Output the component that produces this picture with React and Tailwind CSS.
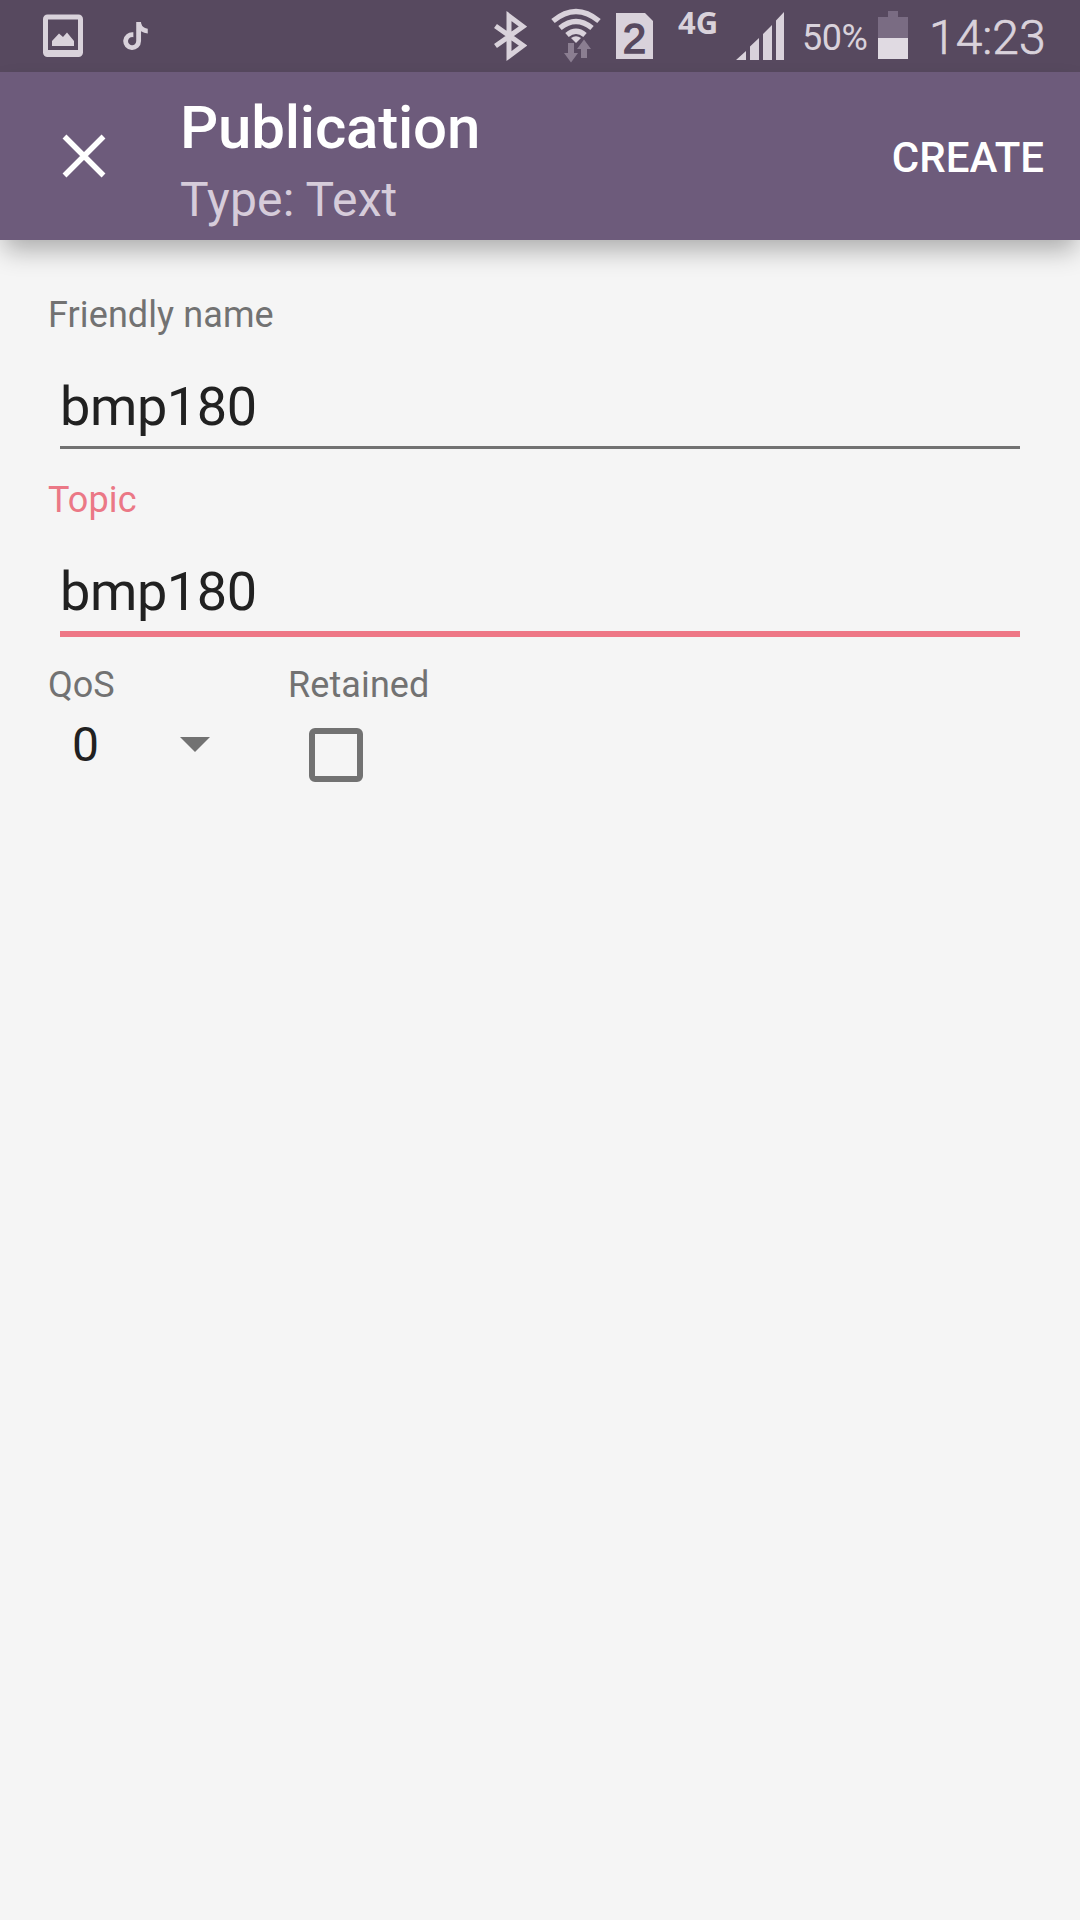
import { FaTiktok } from "react-icons/fa6";

function PictureIcon() {
  return (
    <svg className="w-10 h-[43px] mt-[14px] ml-[43px]" viewBox="0 0 40 43">
      <rect x="2.5" y="3" width="35" height="37.5" rx="2" fill="none" stroke="#d9d2db" strokeWidth="5" />
      <path d="M2 36H38V40.5H2Z M9 27L16 19.5L20 23L24 18.5L31 27V32H9Z" fill="#d9d2db" />
    </svg>
  );
}

function BluetoothIcon() {
  return (
    <svg className="w-[34px] h-[50px] mt-[11px] ml-[345px]" viewBox="0 0 34 50">
      <path
        d="M2.5 15L30 34.5L16 45V5L30 15.5L2.5 35"
        fill="none"
        stroke="#d9d2db"
        strokeWidth="5"
      />
    </svg>
  );
}

function WifiIcon() {
  return (
    <svg className="w-[50px] h-[56px] mt-2 ml-[24px]" viewBox="0 0 50 56">
      <g fill="none" stroke="#d9d2db" strokeWidth="5.4">
        <path d="M2 13Q25 -6 48 13" />
        <path d="M9 20Q25 7 41 20" />
        <path d="M16 27Q25 19.5 34 27" />
      </g>
      <path d="M20 30Q25 26.5 30 30L25 35Z" fill="#d9d2db" />
      <path d="M17 35H23V45H27L20 54.5L13 45H17Z" fill="#8b7e91" />
      <path d="M33 31.5L40 41H36V50H30V41H26Z" fill="#8b7e91" />
    </svg>
  );
}

function SimIcon() {
  return (
    <svg className="w-[37px] h-[46px] mt-[13px] ml-[15px] overflow-visible" viewBox="0 0 37 46">
      <path d="M0 0H29L37 8V46H0Z" fill="#d9d2db" />
      <text
        x="18.5"
        y="39.5"
        textAnchor="middle"
        fontSize="42"
        className="font-['Liberation_Sans',sans-serif]"
        fill="#57495f"
        stroke="#57495f"
        strokeWidth="1.5"
      >
        2
      </text>
    </svg>
  );
}

function SignalIcon() {
  return (
    <svg className="w-12 h-12 mt-3 ml-[18px]" viewBox="0 0 48 48">
      <path d="M0 48L10 39V48Z M14 34.5L23 26V48H14Z M27 22L36 13V48H27Z M40 8.5L48 0V48H40Z" fill="#d9d2db" />
    </svg>
  );
}

function BatteryIcon() {
  return (
    <svg className="w-[30px] h-12 mt-[11px] ml-[10px]" viewBox="0 0 30 48">
      <path d="M10 0H20V6H30V27H0V6H10Z" fill="#7a6c83" />
      <path d="M0 27H30V48H0Z" fill="#e0dae2" />
    </svg>
  );
}

function StatusBar() {
  return (
    <div className="flex items-start h-[72px] bg-[#57495f] text-[#d9d2db] whitespace-nowrap [&>*]:shrink-0">
      <PictureIcon />
      <FaTiktok className="w-[25px] h-7 mt-[22px] ml-10" />
      <BluetoothIcon />
      <WifiIcon />
      <SimIcon />
      <span className="w-10 ml-[25px] mt-1 text-[31px] leading-[37px] font-bold font-['Open_Sans',sans-serif]">4G</span>
      <SignalIcon />
      <span className="w-[66px] ml-[18px] mt-[17px] text-4xl leading-[42px] tracking-[-0.5px]">50%</span>
      <BatteryIcon />
      <span className="ml-[21px] mt-[9px] text-5xl leading-[57px] font-light [-webkit-text-stroke:0.7px_#d9d2db]">14:23</span>
    </div>
  );
}

function AppBar() {
  return (
    <header className="flex items-start h-[168px] bg-[#6d5b7b] text-white shadow-[0_14px_24px_-4px_rgba(0,0,0,0.3)]">
      <button className="mt-[62px] ml-[62px]">
        <svg className="size-11" viewBox="0 0 44 44">
          <path d="M2.5 2.5L41.5 41.5M41.5 2.5L2.5 41.5" stroke="currentColor" strokeWidth="5.5" />
        </svg>
      </button>
      <div className="ml-[74px] mt-[21px]">
        <h1 className="text-6xl leading-[70px] font-medium tracking-[-0.2px]">Publication</h1>
        <p className="text-5xl leading-[73px] tracking-[0.15px] text-[#d6ccda]">Type: Text</p>
      </div>
      <button className="ml-auto mr-9 mt-[61px] text-[42px] leading-[50px] font-medium">CREATE</button>
    </header>
  );
}

function Field({ label, value, focused }) {
  return (
    <div className="h-[185px]">
      <p className={`text-4xl leading-[42px] tracking-[0.1px] ${focused ? "text-[#eb7886]" : "text-[#727272]"}`}>{label}</p>
      <div
        className={`mx-3 mt-[34px] text-[54px] leading-[74px] tracking-[-0.4px] text-[#212121] ${
          focused ? "h-[82px] border-b-[6px] border-[#ee7786]" : "h-[79px] border-b-3 border-[#727272]"
        }`}
      >
        {value}
      </div>
    </div>
  );
}

export default function App() {
  return (
    <div className="w-[1080px] h-[1920px] overflow-hidden bg-[#f5f5f5] font-[Roboto,sans-serif]">
      <StatusBar />
      <AppBar />
      <main className="px-12 pt-[54px]">
        <Field label="Friendly name" value="bmp180" />
        <Field label="Topic" value="bmp180" focused />
        <div className="flex text-[#727272]">
          <div className="w-60">
            <p className="text-4xl leading-[42px]">QoS</p>
            <div className="flex items-center ml-6 mt-2 h-[60px]">
              <span className="w-[108px] pt-0.5 text-5xl leading-[60px] text-[#212121]">0</span>
              <svg className="w-[30px] h-[15px]" viewBox="0 0 30 15">
                <path d="M0 0H30L15 15Z" fill="currentColor" />
              </svg>
            </div>
          </div>
          <div>
            <p className="text-4xl leading-[42px] tracking-[0.1px]">Retained</p>
            <div className="size-[54px] ml-[21px] mt-[22px] border-6 border-[#727272] rounded-md" />
          </div>
        </div>
      </main>
    </div>
  );
}
